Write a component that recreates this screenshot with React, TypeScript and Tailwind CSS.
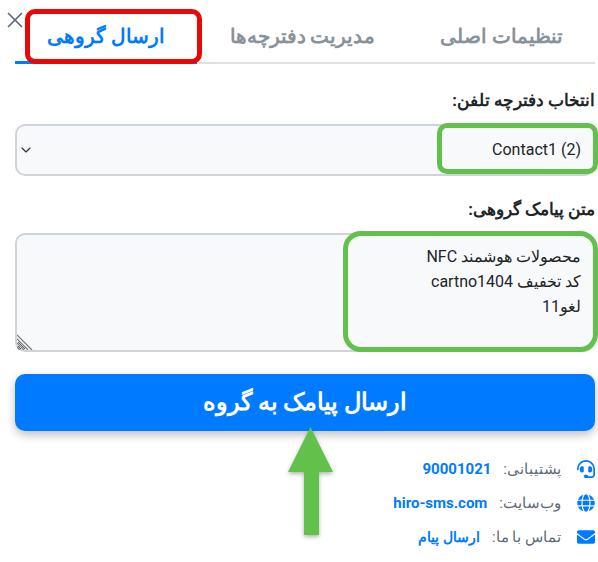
import React, { useState } from 'react';
import { X, ChevronDown } from 'lucide-react';
import { FaHeadset, FaGlobe, FaEnvelope } from 'react-icons/fa';

const tabs = ['تنظیمات اصلی', 'مدیریت دفترچه‌ها', 'ارسال گروهی'];

const App: React.FC = () => {
  const [message, setMessage] = useState('محصولات هوشمند NFC\nکد تخفیف cartno1404\nلغو11');

  return (
    <div dir="rtl" className="relative w-[598px] h-[562px] overflow-hidden bg-white font-['Roboto','Noto_Sans',sans-serif] text-[#212529]">
      <X className="absolute left-[2px] top-[7px] h-[26px] w-[26px] text-[#5f6b7a]" strokeWidth={1.6} />

      <div className="pr-[3px] pl-[15px] pt-[10px]">
        <div className="flex border-b-2 border-[#e0e0e0]">
          {tabs.map((tab, i) => (
            <button
              key={tab}
              className={`flex-auto h-[54px] -mb-[2px] border-b-[3px] whitespace-nowrap px-[28px] text-[20px] font-bold ${
                i === 2 ? 'border-[#007bff] text-[#007bff]' : 'border-transparent text-[#8a9299]'
              }`}
            >
              {tab}
            </button>
          ))}
        </div>

        <label className="mt-[26px] block text-[16.5px] font-bold leading-[22px]">انتخاب دفترچه تلفن:</label>
        <div className="relative mt-[12px]">
          <select className="block h-[52px] w-full appearance-none rounded-[10px] border-2 border-[#ced4da] bg-[#f8f9fa] px-[12px] text-[16px]">
            <option>Contact1 (2)</option>
          </select>
          <ChevronDown className="absolute left-[3px] top-[18px] h-[16px] w-[16px] text-[#333]" strokeWidth={1.75} />
        </div>

        <label className="mt-[23px] block text-[16.5px] font-bold leading-[22px]">متن پیامک گروهی:</label>
        <div className="relative mt-[12px]">
          <textarea
            value={message}
            onChange={(e) => setMessage(e.target.value)}
            className="block h-[119px] w-full rounded-[10px] border-2 border-[#ced4da] bg-[#f8f9fa] px-[12px] py-[9px] text-[16px] leading-[25px] outline-none"
          />
          <svg className="absolute bottom-[2px] left-[2px]" width="16" height="16" viewBox="0 0 16 16">
            <path d="M0 1 L15 16 M0 5 L11 16 M0 9 L7 16 M0 13 L3 16" stroke="#777" strokeWidth="1.2" fill="none" />
          </svg>
        </div>

        <button className="mt-[22px] block h-[57px] w-full rounded-[10px] bg-[#007bff] text-[23.5px] font-bold text-white shadow-[0_4px_10px_rgba(0,0,0,0.25)]">
          ارسال پیامک به گروه
        </button>

        <div className="mt-[29px] flex flex-col gap-[16px] text-[15px] text-[#5f6b7a]">
          <div className="flex h-[18px] items-center">
            <FaHeadset className="ml-[16px] h-[18px] w-[18px] text-[#007bff]" />
            <span>پشتیبانی:</span>
            <span className="mr-[12px] font-bold text-[#007bff]">90001021</span>
          </div>
          <div className="flex h-[18px] items-center">
            <FaGlobe className="ml-[16px] h-[18px] w-[18px] text-[#007bff]" />
            <span>وب‌سایت:</span>
            <span className="mr-[12px] font-bold text-[#007bff]">hiro-sms.com</span>
          </div>
          <div className="flex h-[18px] items-center">
            <FaEnvelope className="ml-[16px] h-[18px] w-[18px] text-[#007bff]" />
            <span>تماس با ما:</span>
            <span className="mr-[12px] text-[14px] font-bold text-[#007bff]">ارسال پیام</span>
          </div>
        </div>
      </div>

      {/* annotations drawn on top of the screenshot */}
      <div className="absolute left-[25px] top-[9px] h-[55px] w-[177px] rounded-[10px] border-[5px] border-[#e70808]" />
      <div className="absolute left-[437px] top-[123px] h-[51px] w-[161px] rounded-[10px] border-[5px] border-[#62c14a]" />
      <div className="absolute left-[343px] top-[231px] h-[121px] w-[255px] rounded-[18px] border-[5px] border-[#62c14a]" />
      <svg className="absolute left-[280px] top-[420px] drop-shadow-[0_2px_2px_rgba(0,0,0,0.3)]" width="64" height="124" viewBox="0 0 64 124">
        <path d="M30.5 7 L53 52 L39 52 L39 115 L24 115 L24 52 L8 52 Z" fill="#62c14a" />
      </svg>
    </div>
  );
};

export default App;
